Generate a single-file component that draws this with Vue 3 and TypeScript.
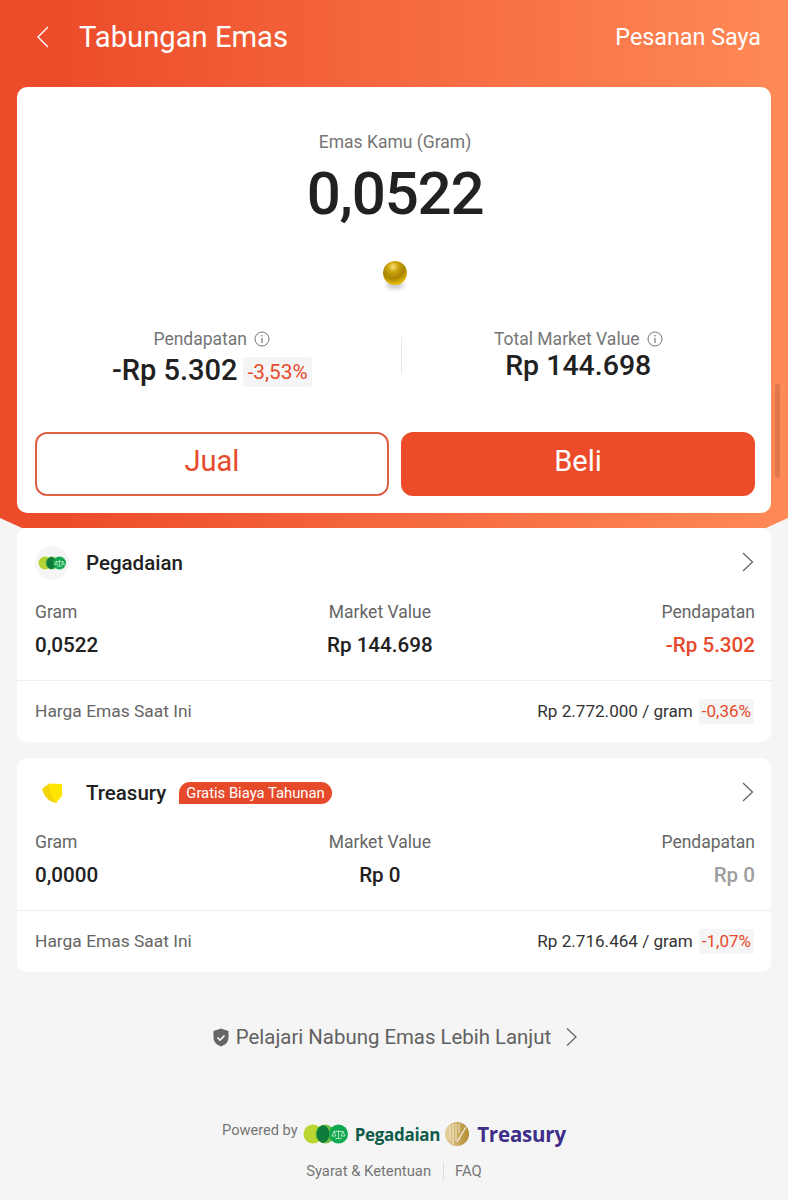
<script setup lang="ts">
interface Provider {
  name: string; gram: string; value: string; income: string; incomeClass: string;
  price: string; change: string; kind: string; badge?: string;
}
const providers: Provider[] = [
  { name: 'Pegadaian', gram: '0,0522', value: 'Rp 144.698', income: '-Rp 5.302', incomeClass: 'neg', price: 'Rp 2.772.000 / gram', change: '-0,36%', kind: 'peg' },
  { name: 'Treasury', gram: '0,0000', value: 'Rp 0', income: 'Rp 0', incomeClass: 'zero', price: 'Rp 2.716.464 / gram', change: '-1,07%', kind: 'tre', badge: 'Gratis Biaya Tahunan' },
];
</script>

<template>
  <div class="page">
    <section class="hero">
      <header class="topbar">
        <div class="top-left">
          <svg class="back" width="16" height="24" viewBox="0 0 16 24" fill="none"><path d="M13 2 3 12 13 22" stroke="#fff" stroke-width="1.4"/></svg>
          <span class="title">Tabungan Emas</span>
        </div>
        <span class="orders">Pesanan Saya</span>
      </header>
      <div class="main-card">
        <div class="label">Emas Kamu (Gram)</div>
        <div class="amount">0,0522</div>
        <div class="ball-wrap"><div class="ball-shadow"></div><div class="ball"></div></div>
        <div class="stats">
          <div class="stat">
            <div class="stat-label">Pendapatan
              <svg width="16" height="16" viewBox="0 0 16 16" fill="none"><circle cx="8" cy="8" r="7" stroke="#757575" stroke-width="1"/><path d="M8 7v5M8 4v1.600" stroke="#757575" stroke-width="1.200"/></svg>
            </div>
            <div class="stat-value neg-row">-Rp 5.302 <span class="chip big">-3,53%</span></div>
          </div>
          <div class="divider"></div>
          <div class="stat">
            <div class="stat-label">Total Market Value
              <svg width="16" height="16" viewBox="0 0 16 16" fill="none"><circle cx="8" cy="8" r="7" stroke="#757575" stroke-width="1"/><path d="M8 7v5M8 4v1.600" stroke="#757575" stroke-width="1.200"/></svg>
            </div>
            <div class="stat-value right-val">Rp 144.698</div>
          </div>
        </div>
        <div class="actions">
          <button class="btn outline">Jual</button>
          <button class="btn solid">Beli</button>
        </div>
      </div>
    </section>

    <section class="list">
      <article v-for="p in providers" :key="p.name" class="prov">
        <div class="prov-head">
          <div class="brand">
            <span class="logo-circle">
              <svg v-if="p.kind === 'peg'" width="28" height="14" viewBox="0 0 28 14">
                <circle cx="7" cy="7" r="6.500" fill="#b5d334"/>
                <circle cx="14" cy="7" r="6.500" fill="#6cbd45"/>
                <path d="M13 .8a6.500 6.500 0 0 0 0 12.400 6.500 6.500 0 0 0 0-12.400z" fill="#0e7c3a"/>
                <circle cx="21.500" cy="7" r="6.500" fill="#12a850"/>
                <path d="M18 5.500h7M18 5.500l-1.500 3h3zM25 5.500l-1.500 3h3zM21.500 4v6M19 10.200h5" stroke="#c8eccc" stroke-width=".7" fill="none"/>
              </svg>
              <svg v-else width="20" height="20" viewBox="0 0 20 20">
                <path d="M0 6 7 .5 9 7 15 20 12 19.500C6 18 2 13 0 6z" fill="#f0d308"/>
                <path d="M7 .5 20 1 20 13 14 20 8 9z" fill="#ffe600"/>
              </svg>
            </span>
            <span class="brand-name">{{ p.name }}</span>
            <span v-if="p.badge" class="badge">{{ p.badge }}</span>
          </div>
          <svg class="chev" width="14" height="22" viewBox="0 0 14 22" fill="none"><path d="M2 2 11.500 11 2 20" stroke="#666" stroke-width="1.300"/></svg>
        </div>
        <div class="cols">
          <div class="col">
            <div class="col-label">Gram</div>
            <div class="col-val">{{ p.gram }}</div>
          </div>
          <div class="col mid">
            <div class="col-label">Market Value</div>
            <div class="col-val">{{ p.value }}</div>
          </div>
          <div class="col end">
            <div class="col-label">Pendapatan</div>
            <div class="col-val" :class="p.incomeClass">{{ p.income }}</div>
          </div>
        </div>
        <div class="price-row">
          <span class="price-label">Harga Emas Saat Ini</span>
          <span class="price">{{ p.price }} <span class="chip">{{ p.change }}</span></span>
        </div>
      </article>
    </section>

    <div class="learn">
      <svg width="16" height="19" viewBox="0 0 16 19"><path d="M8 .5 15.500 3v6.500c0 4.500-3.300 7.500-7.500 9-4.200-1.500-7.500-4.500-7.500-9V3z" fill="#666"/><path d="M4.500 9.500 7 12l4.500-4.500" stroke="#fff" stroke-width="1.600" fill="none"/></svg>
      <span>Pelajari Nabung Emas Lebih Lanjut</span>
      <svg class="learn-arrow" width="14" height="22" viewBox="0 0 14 22" fill="none"><path d="M2 2.500 11 11 2 19.500" stroke="#666" stroke-width="1.300"/></svg>
    </div>

    <footer class="foot">
      <div class="powered">
        <span class="pw">Powered by</span>
        <svg class="peg-logo" width="46" height="20" viewBox="0 0 46 20">
          <circle cx="10" cy="10" r="9.500" fill="#bcd631"/>
          <circle cx="22" cy="10" r="9.500" fill="#6cbd45"/>
          <path d="M20 1a9.500 9.500 0 0 0 0 18 9.500 9.500 0 0 0 0-18z" fill="#0e7c3a"/>
          <circle cx="35.500" cy="10" r="9.500" fill="#12a850"/>
          <path d="M31 7.500h9M31 7.500l-2 4.500h4zM40 7.500l-2 4.500h4zM35.500 6v8M32.500 14.500h6" stroke="#d0f0d4" stroke-width=".8" fill="none"/>
        </svg>
        <span class="peg-word">Pegadaian</span>
        <svg class="gold" width="24" height="24" viewBox="0 0 24 24">
          <defs><linearGradient id="gd" x1="0" x2="1" y1="0" y2="0"><stop offset="0" stop-color="#e8d3a0"/><stop offset="1" stop-color="#b08a2c"/></linearGradient></defs>
          <circle cx="12" cy="12" r="12" fill="url(#gd)"/>
          <path d="M5 4v14M8 2v20M11 2v17M14 2v9" stroke="#fff" stroke-width=".9" opacity=".75"/>
          <path d="M12 20 21 5" stroke="#fff" stroke-width="1.300" opacity=".85"/>
        </svg>
        <span class="tre-word">Treasury</span>
      </div>
      <div class="links">
        <span>Syarat &amp; Ketentuan</span>
        <i class="sep"></i>
        <span>FAQ</span>
      </div>
    </footer>
    <div class="scroll"></div>
  </div>
</template>

<style>
html, body { margin: 0; background: #f5f5f5; }
</style>

<style scoped>
.page { position: relative; width: 788px; height: 1200px; overflow: hidden; background: #f5f5f5; font-family: Roboto, "Liberation Sans", sans-serif; color: #212121; }
.hero { height: 528px; box-sizing: border-box; padding: 0 17px; background: linear-gradient(90deg, #ec4c2a 8%, #ff8a57 100%); clip-path: polygon(0 0, 100% 0, 100% 518px, 766px 528px, 22px 528px, 0 518px); }
.topbar { height: 87px; display: flex; align-items: center; justify-content: space-between; padding: 0 10px 14px 18px; box-sizing: border-box; color: #fff; }
.top-left { display: flex; align-items: center; }
.back { margin-right: 28px; }
.title { font-size: 29.200px; line-height: 36px; }
.orders { font-size: 23.300px; line-height: 30px; }
.main-card { height: 426px; background: #fff; border-radius: 10px; box-sizing: border-box; padding: 45px 16px 0 18px; display: flex; flex-direction: column; }
.label { font-size: 17.500px; line-height: 20px; color: #757575; text-align: center; }
.amount { font-size: 60px; line-height: 70px; font-weight: 500; text-align: center; margin-top: 7px; letter-spacing: -1.200px; }
.ball-wrap { position: relative; width: 26px; height: 30px; margin: 32px auto 0; }
.ball { position: absolute; left: 1px; top: 0; width: 24px; height: 24px; border-radius: 50%; background: radial-gradient(circle at 42% 24%, #f8e272 0%, #c9a20c 24%, #a98400 50%, #eec400 82%, #ffdc00 100%); }
.ball-shadow { position: absolute; left: 4px; top: 20px; width: 18px; height: 8px; border-radius: 50%; background: #c9c9c9; filter: blur(2px); }
.stats { display: grid; grid-template-columns: 1fr 13px 1fr; margin-top: 37px; height: 75px; }
.stat { text-align: center; }
.stat-label { font-size: 17.500px; line-height: 22px; color: #757575; display: flex; align-items: center; justify-content: center; gap: 7px; }
.stat-value { font-size: 29px; line-height: 38px; font-weight: 500; }
.right-val { font-size: 28.500px; margin-top: -3px; }
.neg-row { display: flex; align-items: center; justify-content: center; gap: 6px; margin-top: 1px; }
.divider { justify-self: end; width: 1px; height: 37px; margin-top: 9px; background: #e8e8e8; }
.chip { display: inline-block; background: #f5f5f5; color: #e64a2b; font-weight: 400; padding: 0 4px; border-radius: 2px; }
.chip.big { font-size: 20.800px; line-height: 30px; padding: 0 4px; margin-top: 3px; }
.actions { display: grid; grid-template-columns: 1fr 1fr; gap: 12px; margin-top: 29px; }
.btn { height: 64px; border-radius: 12px; font-family: inherit; font-size: 29px; padding: 0 0 6px; box-sizing: border-box; }
.outline { background: #fff; border: 2px solid #dd6248; color: #e64a2b; }
.solid { background: #ec4c2a; border: 0; color: #fff; }
.list { padding: 0 17px; display: flex; flex-direction: column; gap: 16.500px; }
.prov { background: #fff; border-radius: 10px; height: 213.500px; box-sizing: border-box; display: flex; flex-direction: column; }
.prov-head { height: 73px; padding: 0 18px 3px; box-sizing: border-box; display: flex; align-items: center; justify-content: space-between; }
.chev { transform: translate(2px, -1px); }
.brand { display: flex; align-items: center; }
.logo-circle { width: 34px; height: 34px; border-radius: 50%; background: #f5f5f5; display: flex; align-items: center; justify-content: center; margin-right: 17px; }
.prov:nth-child(2) .logo-circle { background: transparent; }
.brand-name { font-size: 20.500px; font-weight: 500; }
.badge { background: #e64a2b; color: #fff; font-size: 14.800px; line-height: 22px; padding: 0 7px; margin-left: 13px; border-radius: 11px 11px 11px 0; }
.cols { display: flex; justify-content: space-between; padding: 0 16px 0 18px; height: 79px; }
.col-label { font-size: 17.500px; line-height: 22px; color: #666; }
.col-val { font-size: 20.600px; line-height: 26px; font-weight: 500; margin-top: 9px; }
.mid { text-align: center; }
.end { text-align: right; }
.neg { color: #e64a2b; }
.zero { color: #9e9e9e; }
.price-row { flex: 1; border-top: 1px solid #eee; padding: 0 17px 0 18px; display: flex; align-items: center; justify-content: space-between; }
.price-label { font-size: 17.400px; color: #666; }
.price { font-size: 17.100px; display: flex; align-items: center; gap: 6px; color: #333; }
.price .chip { font-size: 17px; line-height: 25px; padding: 0 3px; }
.learn { margin-top: 52.500px; display: flex; align-items: center; justify-content: center; font-size: 20.400px; line-height: 26px; color: #616161; gap: 7px; padding-left: 4px; }
.learn-arrow { margin-left: 7px; }
.foot { position: absolute; left: 0; right: 0; top: 1120px; }
.powered { display: flex; align-items: center; justify-content: center; height: 28px; }
.pw { font-size: 14.600px; color: #757575; margin-right: 5px; margin-top: -8px; }
.peg-word { font-size: 17px; font-weight: 700; color: #0f5c4a; margin: 0 5px 0 6px; font-family: "Open Sans", Roboto, sans-serif; letter-spacing: -.3px; }
.tre-word { font-size: 20.500px; font-weight: 700; color: #3e2e8a; margin-left: 8px; font-family: "Open Sans", Roboto, sans-serif; letter-spacing: -.2px; }
.links { display: flex; align-items: center; justify-content: center; margin-top: 14px; font-size: 14.800px; color: #757575; }
.sep { display: block; width: 1px; height: 18px; background: #ddd; margin: 0 11px 0 12px; }
.scroll { position: absolute; right: 8px; top: 384px; width: 5px; height: 94px; background: rgba(0,0,0,.12); border-radius: 3px; }
</style>
